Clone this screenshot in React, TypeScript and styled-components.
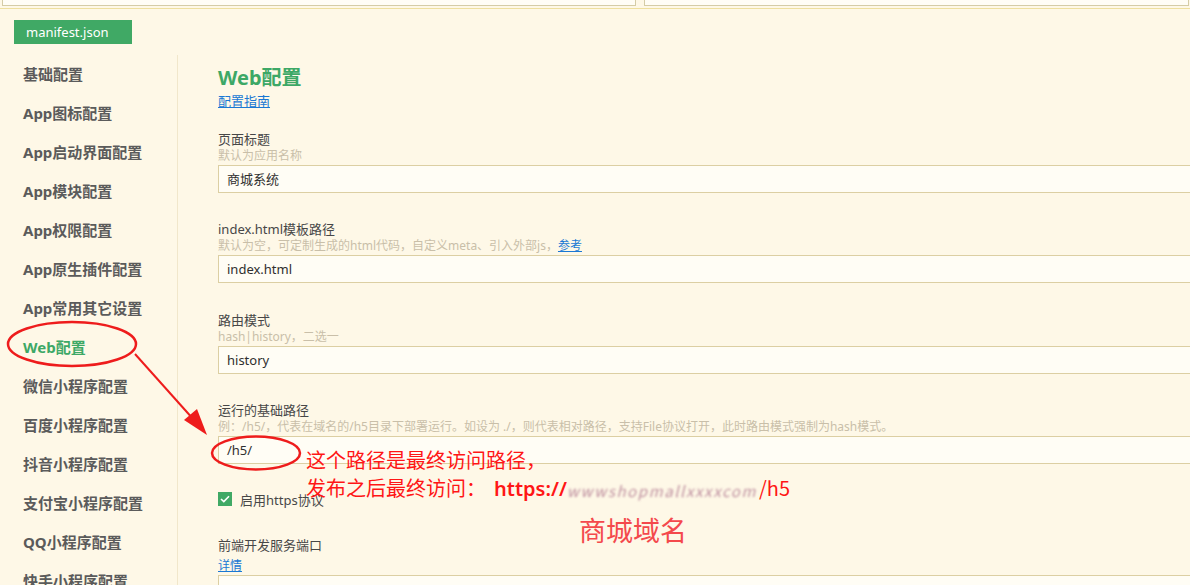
import React from "react";
import styled, { createGlobalStyle } from "styled-components";

const GlobalStyle = createGlobalStyle`
  html, body {
    margin: 0;
    padding: 0;
  }
  body {
    background: #fef8e7;
    font-family: "Noto Sans", "Noto Sans CJK SC", sans-serif;
    overflow: hidden;
  }
`;

const Page = styled.div`
  position: relative;
  width: 1190px;
  height: 585px;
  overflow: hidden;
  background: #fef8e7;
`;

const TopBar = styled.div`
  display: flex;
  gap: 8px;
  height: 8px;
  padding: 0 2px;
  border-bottom: 1px solid #eedf9f;
`;

const TopBox = styled.div<{ $w: number }>`
  flex: 0 0 ${(p) => p.$w}px;
  height: 6px;
  box-sizing: border-box;
  border: 1px solid #d5cca6;
  border-top: none;
  background: #fffdf6;
`;

const Tab = styled.div`
  margin: 11px 0 0 14px;
  width: 118px;
  height: 24px;
  box-sizing: border-box;
  padding-left: 12px;
  background: #40a965;
  color: #fff;
  font-size: 13px;
  line-height: 24px;
`;

const Body = styled.div`
  display: flex;
  margin-top: 11px;
  height: 540px;
`;

const Sidebar = styled.nav`
  flex: 0 0 178px;
  box-sizing: border-box;
  padding-left: 23px;
  border-right: 1px solid #f1e7cb;
`;

const NavItem = styled.div<{ $active?: boolean }>`
  height: 39px;
  line-height: 39px;
  font-size: 15px;
  font-weight: 700;
  white-space: nowrap;
  color: ${(p) => (p.$active ? "#3da866" : "#5b5b5b")};
`;

const Content = styled.main`
  flex: 1;
  min-width: 0;
  padding: 12px 0 0 40px;
`;

const Title = styled.h1`
  margin: 0;
  font-size: 20px;
  line-height: 22px;
  font-weight: 700;
  color: #3da866;
`;

const Link = styled.a`
  color: #1a78d4;
  text-decoration: underline;
  font-size: 12px;
  line-height: 16px;
`;

const GuideLink = styled(Link)<{ $size: number }>`
  display: block;
  margin-top: 4px;
  width: max-content;
  font-size: ${(p) => p.$size}px;
`;

const FieldBlock = styled.div<{ $gap: number }>`
  margin-top: ${(p) => p.$gap}px;
`;

const Label = styled.div`
  font-size: 13px;
  line-height: 18px;
  color: #474747;
`;

const Hint = styled.div`
  font-size: 12px;
  line-height: 16px;
  color: #c9bfa9;
  white-space: nowrap;
`;

const Input = styled.div`
  margin-top: 1px;
  width: calc(100% + 30px);
  height: 28px;
  box-sizing: border-box;
  border: 1px solid #dccfa3;
  border-right: none;
  background: #fffdf5;
  padding: 0 8px;
  font-size: 13px;
  line-height: 26px;
  color: #2f2f2f;
`;

const CheckRow = styled.label`
  display: flex;
  align-items: center;
  gap: 8px;
  margin-top: 26px;
  height: 18px;
  font-size: 13px;
  color: #474747;
`;

const CheckBox = styled.span`
  width: 14px;
  height: 14px;
  background: #40a965;
  display: flex;
  align-items: center;
  justify-content: center;
`;

const Overlay = styled.svg`
  position: absolute;
  left: 0;
  top: 0;
  pointer-events: none;
`;

const Note = styled.div<{ $x: number; $y: number }>`
  position: absolute;
  left: ${(p) => p.$x}px;
  top: ${(p) => p.$y}px;
  font-size: 20px;
  line-height: 28px;
  color: #ff1616;
  white-space: nowrap;
  font-family: "Noto Sans CJK SC", "Noto Sans", sans-serif;
`;

const Bold = styled.span`
  margin-left: 8px;
  font-weight: 600;
  font-family: "Noto Sans", sans-serif;
`;

const Blurred = styled.span`
  display: inline-block;
  font-size: 15px;
  font-style: italic;
  letter-spacing: 1.6px;
  color: #a86a86;
  filter: blur(1.3px);
  opacity: 0.75;
  vertical-align: middle;
  margin-right: 2px;
`;

const DomainNote = styled(Note)`
  font-size: 27px;
  line-height: 36px;
  color: #f4494c;
`;

const navItems = [
  "基础配置",
  "App图标配置",
  "App启动界面配置",
  "App模块配置",
  "App权限配置",
  "App原生插件配置",
  "App常用其它设置",
  "Web配置",
  "微信小程序配置",
  "百度小程序配置",
  "抖音小程序配置",
  "支付宝小程序配置",
  "QQ小程序配置",
  "快手小程序配置",
];

type FieldProps = {
  gap: number;
  label: string;
  hint?: React.ReactNode;
  link?: string;
  value: string;
};

const Field: React.FC<FieldProps> = ({ gap, label, hint, link, value }) => (
  <FieldBlock $gap={gap}>
    <Label>{label}</Label>
    {hint && <Hint>{hint}</Hint>}
    {link && (
      <GuideLink href="#" $size={12}>
        {link}
      </GuideLink>
    )}
    <Input>{value}</Input>
  </FieldBlock>
);

const Annotations: React.FC = () => (
  <>
    <Overlay width="1190" height="585">
      <ellipse cx="72" cy="344" rx="64" ry="22" fill="none" stroke="#ee1c1c" strokeWidth="2.5" />
      <ellipse cx="256" cy="453" rx="44" ry="16.5" fill="none" stroke="#ee1c1c" strokeWidth="2.5" />
      <line x1="135" y1="354" x2="194" y2="420" stroke="#ee1c1c" strokeWidth="2" />
      <polygon points="207,435 184,420 197,409" fill="#ee1c1c" />
    </Overlay>
    <Note $x={306} $y={446}>这个路径是最终访问路径，</Note>
    <Note $x={306} $y={474}>
      发布之后最终访问：<Bold>https://</Bold>
      <Blurred>wwwshopmallxxxxcom</Blurred>/h5
    </Note>
    <DomainNote $x={579} $y={512}>商城域名</DomainNote>
  </>
);

const App: React.FC = () => {
  return (
    <Page>
      <GlobalStyle />
      <TopBar>
        <TopBox $w={634} />
        <TopBox $w={545} />
      </TopBar>
      <Tab>manifest.json</Tab>
      <Body>
        <Sidebar>
          {navItems.map((item) => (
            <NavItem key={item} $active={item === "Web配置"}>
              {item}
            </NavItem>
          ))}
        </Sidebar>
        <Content>
          <Title>Web配置</Title>
          <GuideLink href="#" $size={13}>
            配置指南
          </GuideLink>
          <Field gap={21} label="页面标题" hint="默认为应用名称" value="商城系统" />
          <Field
            gap={27}
            label="index.html模板路径"
            hint={
              <>
                默认为空，可定制生成的html代码，自定义meta、引入外部js，<Link href="#">参考</Link>
              </>
            }
            value="index.html"
          />
          <Field gap={28} label="路由模式" hint="hash|history，二选一" value="history" />
          <Field
            gap={27}
            label="运行的基础路径"
            hint="例：/h5/，代表在域名的/h5目录下部署运行。如设为 ./，则代表相对路径，支持File协议打开，此时路由模式强制为hash模式。"
            value="/h5/"
          />
          <CheckRow>
            <CheckBox>
              <svg width="10" height="8" viewBox="0 0 10 8">
                <path d="M1 4l2.8 2.6L9 1.2" fill="none" stroke="#fff" strokeWidth="1.6" />
              </svg>
            </CheckBox>
            启用https协议
          </CheckRow>
          <Field gap={28} label="前端开发服务端口" link="详情" value="" />
        </Content>
      </Body>
      <Annotations />
    </Page>
  );
};

export default App;
